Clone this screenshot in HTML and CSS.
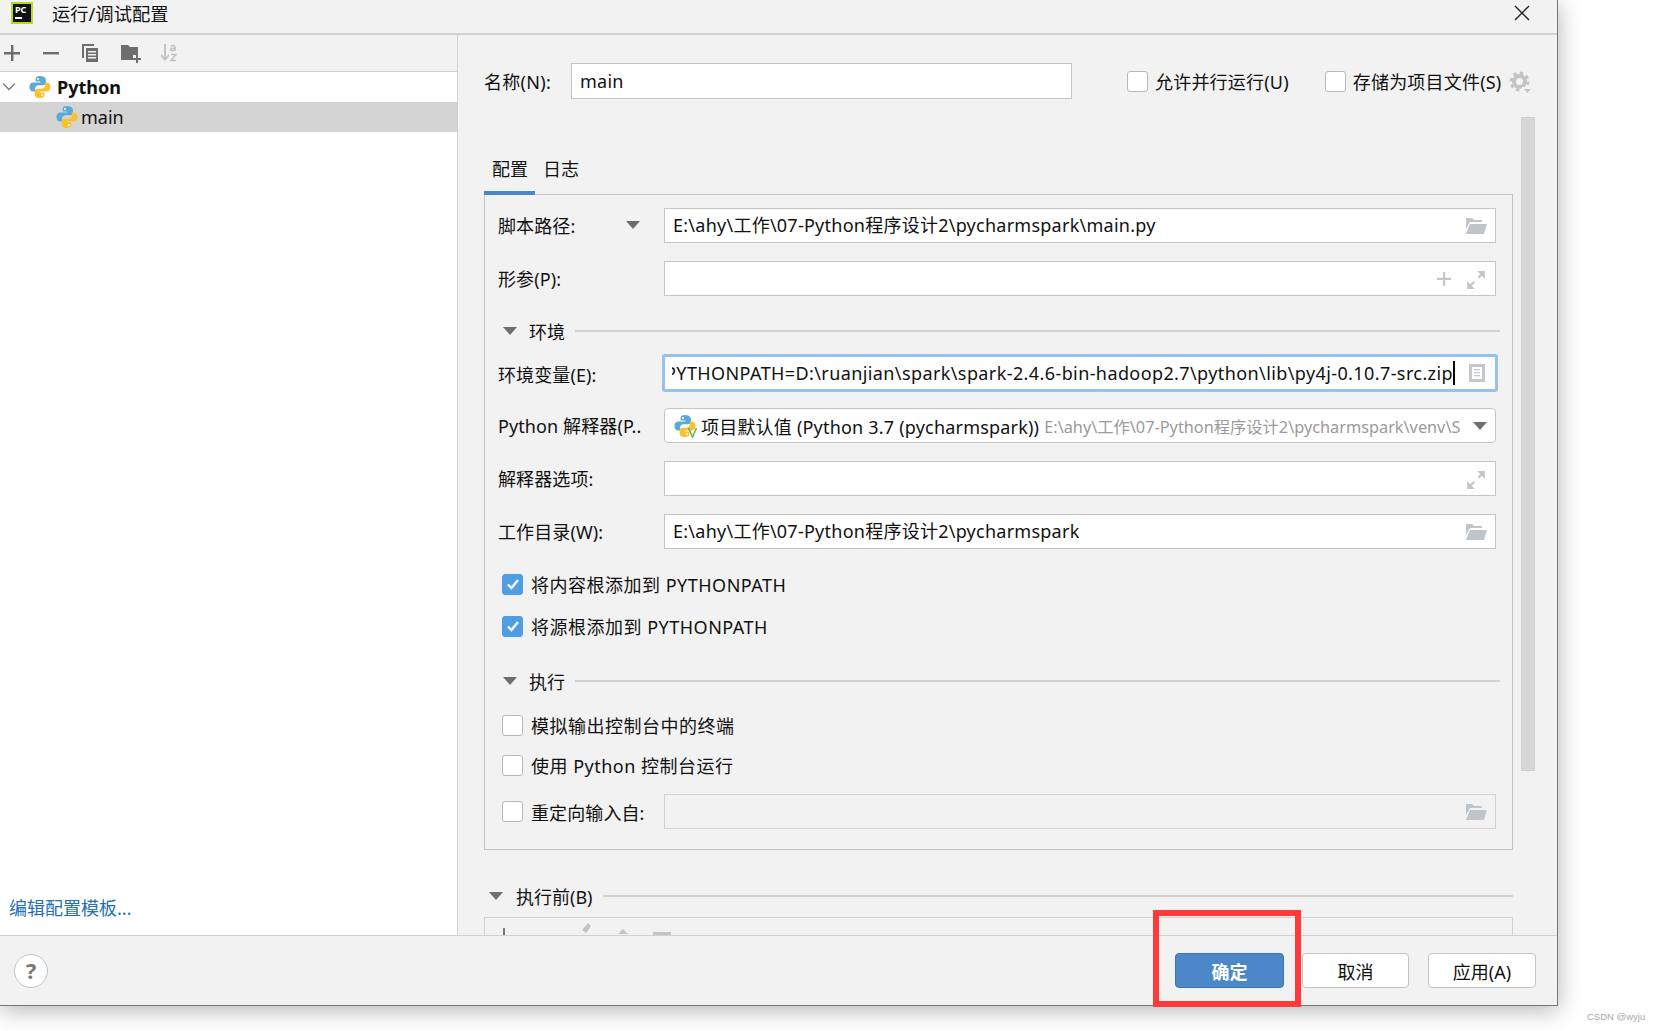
FILE: index.html
```html
<!DOCTYPE html>
<html lang="zh-CN">
<head>
    <meta charset="UTF-8">
    <title>运行/调试配置</title>
    <link rel="stylesheet" href="styles.css">
</head>
<body>
    <svg class="defs" width="0" height="0">
        <defs>
            <symbol id="py" viewBox="0 0 24 24">
                <path fill="#5aa9d6" d="M12 1C9 1 7.600 2 7.600 4v2.600h4.700v1H5.200C3 7.600 1.500 9.300 1.500 12s1.400 4.500 3.600 4.500h2v-3c0-2 1.500-3.300 3.500-3.300h4.500c1.600 0 2.800-1.200 2.800-2.800V4C16.900 2 15 1 12 1z"/>
                <path fill="#fbc02d" d="M12 23c3 0 4.400-1 4.400-3v-2.600h-4.700v-1h7.100c2.200 0 3.700-1.700 3.700-4.400s-1.400-4.500-3.600-4.500h-2v3c0 2-1.500 3.300-3.500 3.300H9.400c-1.600 0-2.800 1.200-2.800 2.800V20C6.600 22 9 23 12 23z"/>
                <circle cx="10" cy="3.900" r="1" fill="#fff"/>
                <circle cx="14" cy="20.100" r="1" fill="#fff"/>
            </symbol>
            <symbol id="folder" viewBox="0 0 22 18">
                <path fill="#bfc5c9" d="M1 1h6l2 2h8v2H5L1 12z"/>
                <path fill="#bfc5c9" d="M5 7h17l-3 10H0.800z"/>
            </symbol>
            <symbol id="expand" viewBox="0 0 18 18">
                <path fill="none" stroke="#c4c8cb" stroke-width="2" d="M3 15l4.500-4.500M11 7l4.500-4.500"/>
                <path fill="#c4c8cb" d="M10 1h7v7zM1 10v7h7z"/>
            </symbol>
            <symbol id="tri" viewBox="0 0 14 8">
                <path fill="#6e6e6e" d="M0 0h14L7 8z"/>
            </symbol>
        </defs>
    </svg>

    <div class="page">
        <div class="dialog">
            <div class="titlebar">
                <div class="app-logo"><span>PC</span><i></i></div>
                <div class="title">运行/调试配置</div>
                <svg class="close" width="16" height="16" viewBox="0 0 16 16"><path stroke="#222" stroke-width="1.400" d="M1 1l14 14M15 1L1 15"/></svg>
            </div>

            <div class="main">
                <div class="sidebar">
                    <div class="toolbar">
                        <svg width="18" height="18" viewBox="0 0 18 18"><path fill="#6e6e6e" d="M8 1h2.400v7H17v2.400h-6.600V17H8v-6.600H1V8h7z"/></svg>
                        <svg class="tool-minus" width="18" height="18" viewBox="0 0 18 18"><path fill="#6e6e6e" d="M1 8h16v2.400H1z"/></svg>
                        <svg width="20" height="20" viewBox="0 0 20 20"><path fill="#6e6e6e" d="M2 1h12v2H4v12H2z"/><path fill="#6e6e6e" d="M6 5h12v14H6zm2 3v1.500h8V8zm0 3v1.500h8V11zm0 3v1.500h8V14z" fill-rule="evenodd"/></svg>
                        <svg width="22" height="20" viewBox="0 0 22 20"><path fill="#6e6e6e" d="M1 2h7l2 2h8v8h-5v5H1z"/><path fill="#6e6e6e" d="M16 12h2v3h3v2h-3v3h-2v-3h-3v-2h3z"/></svg>
                        <svg class="tool-sort" width="20" height="20" viewBox="0 0 20 20"><path fill="#c2c2c2" d="M5 1h2v13l3-3v2.500L6 18l-4-4.500V11l3 3z"/><path fill="none" stroke="#c2c2c2" stroke-width="1.500" d="M12 3.500c1-1.300 4-1.300 4 .5v4M16 5.500c-3-.5-4.500.2-4.500 1.300 0 1.400 3 1.500 4.500-.3M12 11.500h5l-5 6h5"/></svg>
                    </div>
                    <div class="tree">
                        <div class="tree-row">
                            <svg class="chevron" width="14" height="10" viewBox="0 0 14 10"><path fill="none" stroke="#777" stroke-width="1.300" d="M1 1.500l6 6 6-6"/></svg>
                            <svg class="py-icon" width="24" height="24"><use href="#py"/></svg>
                            <b>Python</b>
                        </div>
                        <div class="tree-row tree-child selected">
                            <svg class="py-icon" width="24" height="24"><use href="#py"/></svg>
                            <span>main</span>
                        </div>
                    </div>
                    <a class="template-link">编辑配置模板...</a>
                </div>

                <div class="content">
                    <div class="name-row">
                        <span class="name-label">名称(N):</span>
                        <div class="field name-field">main</div>
                        <label class="check first-check"><i class="box"></i>允许并行运行(U)</label>
                        <label class="check second-check"><i class="box"></i>存储为项目文件(S)</label>
                        <svg class="gear" width="24" height="24" viewBox="0 0 24 24">
                            <circle cx="10.500" cy="10.500" r="5.500" fill="none" stroke="#c4c4c4" stroke-width="4"/>
                            <circle cx="10.500" cy="10.500" r="8.500" fill="none" stroke="#c4c4c4" stroke-width="3" stroke-dasharray="3.400 3.280"/>
                            <path fill="#f2f2f2" d="M13 16h11v8H13z"/>
                            <path fill="#c4c4c4" d="M15 18h7l-3.500 4z"/>
                        </svg>
                    </div>

                    <div class="tabs">
                        <div class="tab active">配置</div>
                        <div class="tab">日志</div>
                    </div>

                    <div class="panel">
                        <div class="row">
                            <span class="label script-label">脚本路径:<svg width="14" height="8"><use href="#tri"/></svg></span>
                            <div class="field">E:\ahy\工作\07-Python程序设计2\pycharmspark\main.py
                                <svg class="field-icon" width="22" height="18"><use href="#folder"/></svg>
                            </div>
                        </div>
                        <div class="row gap-18">
                            <span class="label">形参(P):</span>
                            <div class="field">
                                <svg class="field-icon plus" width="16" height="16" viewBox="0 0 16 16"><path fill="#c4c8cb" d="M7 1h2.200v5.800H15V9H9.200v6H7V9H1V6.800h6z"/></svg>
                                <svg class="field-icon expand" width="20" height="20"><use href="#expand"/></svg>
                            </div>
                        </div>

                        <div class="section env-section">
                            <svg width="14" height="8"><use href="#tri"/></svg>
                            <span>环境</span>
                            <i></i>
                        </div>

                        <div class="row env-row">
                            <span class="label env-label">环境变量(E):</span>
                            <div class="field focused">
                                <div class="env-text"><span>PYTHONPATH=D:\ruanjian\spark\spark-2.4.6-bin-hadoop2.7\python\lib\py4j-0.10.7-src.zip</span></div>
                                <svg class="doc-icon" width="18" height="20" viewBox="0 0 18 20"><path fill="#c4c8cb" fill-rule="evenodd" d="M1 1h16v18H1zm3 3v12h10V4zm2 2h6v1.200H6zm0 3h6v1.200H6zm0 3h6v1.200H6z"/></svg>
                            </div>
                        </div>
                        <div class="row gap-16">
                            <span class="label">Python 解释器(P..</span>
                            <div class="field combo">
                                <span class="venv-icon">
                                    <svg width="24" height="24"><use href="#py"/></svg>
                                    <svg class="v-mark" width="11" height="11" viewBox="0 0 11 11"><path fill="none" stroke="#62b543" stroke-width="1.500" d="M1.500 1l4 9 4-9"/></svg>
                                </span>
                                <span class="combo-main">项目默认值 (Python 3.7 (pycharmspark))</span>
                                <span class="combo-path">E:\ahy\工作\07-Python程序设计2\pycharmspark\venv\S</span>
                                <svg class="combo-arrow" width="14" height="8"><use href="#tri"/></svg>
                            </div>
                        </div>
                        <div class="row gap-18">
                            <span class="label">解释器选项:</span>
                            <div class="field">
                                <svg class="field-icon expand" width="20" height="20"><use href="#expand"/></svg>
                            </div>
                        </div>
                        <div class="row gap-18">
                            <span class="label">工作目录(W):</span>
                            <div class="field">E:\ahy\工作\07-Python程序设计2\pycharmspark
                                <svg class="field-icon" width="22" height="18"><use href="#folder"/></svg>
                            </div>
                        </div>

                        <label class="check check-row first-row"><i class="box checked"><svg width="16" height="16" viewBox="0 0 16 16"><path fill="none" stroke="#fff" stroke-width="2.400" d="M3 8.500l3.500 3.500L13 4"/></svg></i>将内容根添加到 PYTHONPATH</label>
                        <label class="check check-row second-row"><i class="box checked"><svg width="16" height="16" viewBox="0 0 16 16"><path fill="none" stroke="#fff" stroke-width="2.400" d="M3 8.500l3.500 3.500L13 4"/></svg></i>将源根添加到 PYTHONPATH</label>

                        <div class="section exec-section">
                            <svg width="14" height="8"><use href="#tri"/></svg>
                            <span>执行</span>
                            <i></i>
                        </div>

                        <label class="check check-row term-row"><i class="box"></i>模拟输出控制台中的终端</label>
                        <label class="check check-row console-row"><i class="box"></i>使用 Python 控制台运行</label>
                        <div class="row redirect-row">
                            <label class="check label"><i class="box"></i>重定向输入自:</label>
                            <div class="field disabled">
                                <svg class="field-icon" width="22" height="18"><use href="#folder"/></svg>
                            </div>
                        </div>
                    </div>

                    <div class="section before-section">
                        <svg width="14" height="8"><use href="#tri"/></svg>
                        <span>执行前(B)</span>
                        <i></i>
                    </div>
                    <div class="before-panel">
                        <svg width="190" height="20" viewBox="0 0 190 20">
                            <path fill="#777" d="M18 10h2v10h-2z"/>
                            <path fill="#c4c4c4" d="M97 12l6-7 3 3-5 7zM133 16l5-5 5 5zM168 14h18v3h-18z"/>
                        </svg>
                    </div>
                    <div class="scrollbar"></div>
                </div>
            </div>

            <div class="footer">
                <div class="help">?</div>
                <div class="buttons">
                    <button class="btn primary">确定</button>
                    <button class="btn">取消</button>
                    <button class="btn apply">应用(A)</button>
                </div>
            </div>
        </div>

        <div class="annotation"></div>
        <div class="watermark">CSDN @wyju</div>
    </div>
</body>
</html>
```

FILE: styles.css
```css
:root {
    --bg: #f2f2f2;
    --line: #d1d1d1;
    --field-line: #c4c4c4;
    --blue: #4f9ee3;
}

* {
    box-sizing: border-box;
}

body {
    margin: 0;
    background: #fff;
    color: #111;
    font-family: "Noto Sans", "Noto Sans CJK SC", sans-serif;
    font-size: 18px;
}

.defs {
    display: block;
    height: 0;
}

.page {
    position: relative;
    width: 1657px;
    height: 1031px;
    overflow: hidden;
}

.dialog {
    width: 1558px;
    height: 1006px;
    background: var(--bg);
    border-right: 1px solid #777;
    border-bottom: 1px solid #777;
    box-shadow: 0 4px 22px rgba(0,0,0,0.3);
    display: flex;
    flex-direction: column;
}

/* title bar */
.titlebar {
    height: 35px;
    flex-shrink: 0;
    border-bottom: 2px solid var(--line);
    display: flex;
    align-items: center;
    padding-left: 11px;
    padding-right: 27px;
}

.app-logo {
    position: relative;
    width: 22px;
    height: 22px;
    margin-top: -7px;
    border: 2px solid #b5d91c;
    background: #111;
    color: #fff;
    font-size: 9px;
    font-weight: 700;
    line-height: 12px;
    padding-left: 2px;
}

.app-logo i {
    display: block;
    width: 7px;
    height: 2px;
    background: #fff;
    margin-top: 1px;
}

.title {
    margin-left: 19px;
    margin-top: -8px;
    font-size: 18.300px;
    flex: 1;
}

.close {
    margin-top: -8px;
}

/* main area */
.main {
    flex: 1;
    display: flex;
    min-height: 0;
}

.sidebar {
    width: 458px;
    flex-shrink: 0;
    border-right: 1px solid var(--line);
    display: flex;
    flex-direction: column;
    background: #fff;
}

.toolbar {
    height: 37px;
    background: var(--bg);
    border-bottom: 1px solid var(--line);
    display: flex;
    align-items: center;
    gap: 20px;
    padding-left: 3px;
}

.tool-minus {
    margin-left: 1px;
}

.tool-sort {
    margin-left: -3px;
}

.tree {
    flex: 1;
}

.tree-row {
    height: 30px;
    display: flex;
    align-items: center;
    padding-left: 2px;
}

.chevron {
    margin-right: 12px;
}

.tree-row b {
    margin-left: 5px;
    font-weight: 700;
}

.tree-child {
    padding-left: 55px;
    background: #d4d4d4;
}

.tree-child span {
    margin-left: 2px;
}

.template-link {
    color: #2470b3;
    padding: 0 0 15px 9px;
    line-height: 24px;
}

/* right side */
.content {
    position: relative;
    flex: 1;
    overflow: hidden;
    padding: 28px 0 0 26px;
    min-width: 0;
}

.name-row {
    display: flex;
    align-items: center;
    height: 36px;
}

.name-label {
    width: 87px;
    letter-spacing: 0.3px;
}

.field {
    position: relative;
    flex: 1;
    min-width: 0;
    height: 35px;
    background: #fff;
    border: 1px solid var(--field-line);
    padding: 0 0 3px 8px;
    display: flex;
    align-items: center;
    white-space: nowrap;
    overflow: hidden;
    letter-spacing: 0.25px;
}

.name-field {
    flex: none;
    width: 501px;
    height: 36px;
    padding-bottom: 0;
}

.check {
    display: flex;
    align-items: center;
    white-space: nowrap;
}

.name-row .check {
    letter-spacing: 0.2px;
}

.box {
    width: 21px;
    height: 21px;
    background: #fff;
    border: 1px solid #b8b8b8;
    border-radius: 3px;
    margin-right: 7px;
    flex-shrink: 0;
    display: flex;
    align-items: center;
    justify-content: center;
}

.box.checked {
    background: var(--blue);
    border-color: var(--blue);
}

.first-check {
    margin-left: 55px;
}

.second-check {
    margin-left: 36px;
}

.gear {
    margin: 4px 0 0 8px;
}

.tabs {
    display: flex;
    height: 50px;
    margin-top: 48px;
}

.tab {
    height: 48px;
    padding: 9px 8px 0;
    line-height: 26px;
    width: 51px;
    white-space: nowrap;
}

.tab.active {
    border-bottom: 4px solid #4a88c7;
}

.panel {
    width: 1029px;
    margin-top: -3px;
    border: 1px solid var(--field-line);
    padding: 13px 16px 20px 13px;
}

.row {
    display: flex;
    align-items: center;
}

.gap-18 {
    margin-top: 18px;
}

.gap-16 {
    margin-top: 16px;
}

.label {
    width: 166px;
    flex-shrink: 0;
    white-space: nowrap;
    padding-bottom: 2px;
    letter-spacing: 0.1px;
}

.env-label {
    padding: 2px 0 0;
}

.script-label {
    display: flex;
    align-items: center;
}

.script-label svg {
    margin-left: 51px;
}

.field-icon {
    position: absolute;
    right: 8px;
    top: 8px;
}

.field-icon.plus {
    right: 43px;
    top: 9px;
}

.field-icon.expand {
    right: 9px;
}

/* collapsible section headings */
.section {
    display: flex;
    align-items: center;
    height: 24px;
}

.section i {
    flex: 1;
    height: 2px;
    background: var(--line);
    margin-left: 10px;
}

.section span {
    margin-left: 12px;
}

.env-section {
    margin: 23px -4px 0 5px;
}

.exec-section {
    margin: 28px -4px 0 5px;
}

.before-section {
    width: 1029px;
    margin: 34px 0 0 5px;
    padding-right: 5px;
}

.before-section span {
    margin-left: 13px;
}

.env-row {
    margin-top: 11px;
}

.focused {
    height: 38px;
    flex: none;
    width: 836px;
    margin: 0 -2px;
    border: 3px solid #97c1ee;
    border-radius: 3px;
    padding: 0 40px 0 7px;
}

.env-text {
    flex: 1;
    min-width: 0;
    display: flex;
    justify-content: flex-end;
    overflow: hidden;
    height: 100%;
    align-items: center;
    letter-spacing: 0.4px;
}

.env-text span {
    flex-shrink: 0;
    border-right: 2px solid #000;
    line-height: 24px;
}

.doc-icon {
    position: absolute;
    right: 9px;
    top: 6px;
}

.combo {
    border-radius: 4px;
    padding-bottom: 0;
    letter-spacing: 0.2px;
}

.venv-icon {
    position: relative;
    display: flex;
    margin-right: 4px;
}

.v-mark {
    position: absolute;
    right: -1px;
    bottom: 0;
}

.combo-path {
    margin-left: 5px;
    color: #9a9a9a;
    font-size: 16.300px;
    overflow: hidden;
    width: 418px;
    letter-spacing: 0;
}

.combo-arrow {
    position: absolute;
    right: 8px;
    top: 13px;
}

.check-row {
    height: 30px;
    margin-left: 4px;
    letter-spacing: 0.5px;
}

.check-row .box {
    margin-right: 8px;
}

.first-row {
    margin-top: 20px;
}

.second-row {
    margin-top: 12px;
}

.term-row {
    margin-top: 17px;
}

.console-row {
    margin-top: 10px;
}

.redirect-row {
    margin-top: 14px;
}

.redirect-row .label {
    padding-left: 4px;
    padding-bottom: 0;
}

.redirect-row .box {
    margin-right: 8px;
}

.disabled {
    background: var(--bg);
    border-color: var(--line);
}

.before-panel {
    width: 1029px;
    height: 40px;
    margin-top: 9px;
    border: 1px solid var(--line);
    overflow: hidden;
}

.scrollbar {
    position: absolute;
    left: 1063px;
    top: 82px;
    width: 14px;
    height: 654px;
    background: #d6d6d6;
    border: 1px solid #cfcfcf;
}

/* footer */
.footer {
    height: 70px;
    flex-shrink: 0;
    border-top: 1px solid var(--line);
    display: flex;
    align-items: center;
    justify-content: space-between;
    padding: 0 21px 0 14px;
}

.help {
    width: 34px;
    height: 34px;
    border-radius: 50%;
    background: #fff;
    border: 1px solid #c4c4c4;
    color: #777;
    font-weight: 700;
    font-size: 22px;
    text-align: center;
    line-height: 31px;
}

.buttons {
    display: flex;
    gap: 18px;
}

.btn {
    width: 107px;
    height: 35px;
    background: #fff;
    border: 1px solid #c4c4c4;
    border-radius: 4px;
    font-family: inherit;
    font-size: 18px;
    color: #111;
    padding: 0;
}

.btn.apply {
    width: 108px;
    margin-left: 1px;
}

.btn.primary {
    width: 109px;
    background: #4c88c8;
    border-color: #3f76b0;
    color: #fff;
    font-weight: 700;
}

/* screenshot overlays */
.annotation {
    position: absolute;
    left: 1153px;
    top: 910px;
    width: 148px;
    height: 97px;
    border: 6px solid #fe3a3a;
}

.watermark {
    position: absolute;
    left: 1587px;
    top: 1011px;
    font-family: "Liberation Sans", sans-serif;
    font-size: 9.500px;
    color: #a8a8a8;
}
```
